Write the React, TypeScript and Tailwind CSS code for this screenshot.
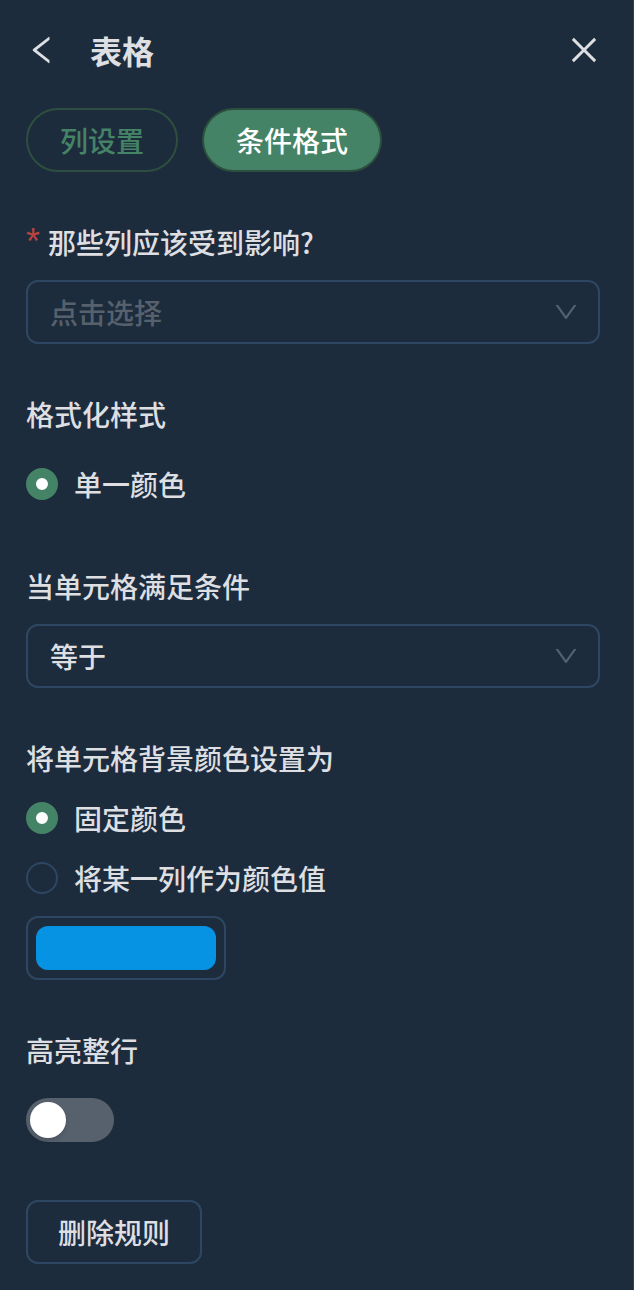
import { useId, useState } from "react";
import type { ReactNode } from "react";
import { AiOutlineClose, AiOutlineDown, AiOutlineLeft } from "react-icons/ai";

function Field({
  label,
  htmlFor,
  required,
  children,
}: {
  label: string;
  htmlFor?: string;
  required?: boolean;
  children: ReactNode;
}) {
  return (
    <div className="flex flex-col items-start gap-4">
      <label htmlFor={htmlFor} className="flex gap-2">
        {required && (
          <span className="font-['Liberation_Sans',sans-serif] text-[36px] font-normal text-[#b8433f]">
            *
          </span>
        )}
        <span>{label}</span>
      </label>
      {children}
    </div>
  );
}

function Select({
  id,
  value,
  onChange,
  options,
  placeholder,
}: {
  id: string;
  value: string;
  onChange: (value: string) => void;
  options: string[];
  placeholder?: string;
}) {
  return (
    <div className="grid w-full items-center">
      <select
        id={id}
        value={value}
        onChange={(e) => onChange(e.target.value)}
        className={`col-start-1 row-start-1 h-16 w-full appearance-none rounded-xl border-2 border-[#2d4763] bg-transparent pr-14 pl-[22px] outline-none ${
          value === "" ? "text-[#56616d]" : "text-[#dddfe2]"
        }`}
      >
        {placeholder && <option value="">{placeholder}</option>}
        {options.map((option) => (
          <option key={option}>{option}</option>
        ))}
      </select>
      <AiOutlineDown
        aria-hidden
        className="pointer-events-none col-start-1 row-start-1 mr-5 size-7 justify-self-end text-[#56616d]"
      />
    </div>
  );
}

function Radio({
  name,
  label,
  checked,
  onChange,
}: {
  name: string;
  label: string;
  checked: boolean;
  onChange: () => void;
}) {
  return (
    <label className="flex items-center gap-4">
      <input
        type="radio"
        name={name}
        checked={checked}
        onChange={onChange}
        className="size-8 shrink-0 appearance-none rounded-full border-2 border-[#2d4763] checked:border-[10px] checked:border-[#458366] checked:bg-white"
      />
      <span>{label}</span>
    </label>
  );
}

export default function App() {
  const id = useId();
  const [tab, setTab] = useState("条件格式");
  const [column, setColumn] = useState("");
  const [operator, setOperator] = useState("等于");
  const [source, setSource] = useState("固定颜色");
  const [color, setColor] = useState("#0693e3");
  const [highlight, setHighlight] = useState(false);

  return (
    <main className="min-h-screen border-r border-[#3b3b3c] bg-[#1d2c3c] pr-[33px] pb-[26px] pl-[26px] font-['Noto_Sans_CJK_SC',sans-serif] text-[28px] leading-[44px] font-medium text-[#dddfe2]">
      <header className="flex items-center pt-[26px]">
        <button
          type="button"
          aria-label="返回"
          className="flex size-8 items-center justify-center"
        >
          <AiOutlineLeft className="size-9 shrink-0" />
        </button>
        <h1 className="ml-8 flex-1 text-[32px] leading-[48px] font-bold">表格</h1>
        <button
          type="button"
          aria-label="关闭"
          className="flex size-8 items-center justify-center"
        >
          <AiOutlineClose className="size-9 shrink-0" />
        </button>
      </header>

      <nav className="mt-[34px] flex gap-6">
        {["列设置", "条件格式"].map((name) => (
          <button
            key={name}
            type="button"
            aria-pressed={tab === name}
            onClick={() => setTab(name)}
            className={`h-16 rounded-full border-2 border-[#2d4f3f] px-8 ${
              tab === name ? "bg-[#458366] text-white" : "text-[#458366]"
            }`}
          >
            {name}
          </button>
        ))}
      </nav>

      <form className="mt-12 flex flex-col gap-12">
        <Field label="那些列应该受到影响?" htmlFor={`${id}-column`} required>
          <Select
            id={`${id}-column`}
            value={column}
            onChange={setColumn}
            options={[]}
            placeholder="点击选择"
          />
        </Field>

        <Field label="格式化样式">
          <div className="flex h-16 items-center">
            <Radio name="style" label="单一颜色" checked onChange={() => {}} />
          </div>
        </Field>

        <Field label="当单元格满足条件" htmlFor={`${id}-operator`}>
          <Select
            id={`${id}-operator`}
            value={operator}
            onChange={setOperator}
            options={["等于"]}
          />
        </Field>

        <Field label="将单元格背景颜色设置为" htmlFor={`${id}-color`}>
          {["固定颜色", "将某一列作为颜色值"].map((name) => (
            <Radio
              key={name}
              name="source"
              label={name}
              checked={source === name}
              onChange={() => setSource(name)}
            />
          ))}
          <input
            id={`${id}-color`}
            type="color"
            value={color}
            onChange={(e) => setColor(e.target.value)}
            className="h-16 w-[200px] appearance-none rounded-xl border-2 border-[#2d4763] bg-transparent p-2 [&::-webkit-color-swatch]:rounded-xl [&::-webkit-color-swatch]:border-0 [&::-webkit-color-swatch-wrapper]:p-0"
          />
        </Field>

        <Field label="高亮整行" htmlFor={`${id}-highlight`}>
          <div className="flex h-16 items-center">
            <input
              id={`${id}-highlight`}
              type="checkbox"
              role="switch"
              checked={highlight}
              onChange={(e) => setHighlight(e.target.checked)}
              className="flex h-11 w-[88px] appearance-none items-center rounded-full bg-[#56616d] px-1 before:size-9 before:rounded-full before:bg-white before:shadow-md before:content-[''] checked:justify-end checked:bg-[#458366]"
            />
          </div>
        </Field>

        <button
          type="button"
          className="h-16 self-start rounded-xl border-2 border-[#2d4763] px-[30px]"
        >
          删除规则
        </button>
      </form>
    </main>
  );
}
